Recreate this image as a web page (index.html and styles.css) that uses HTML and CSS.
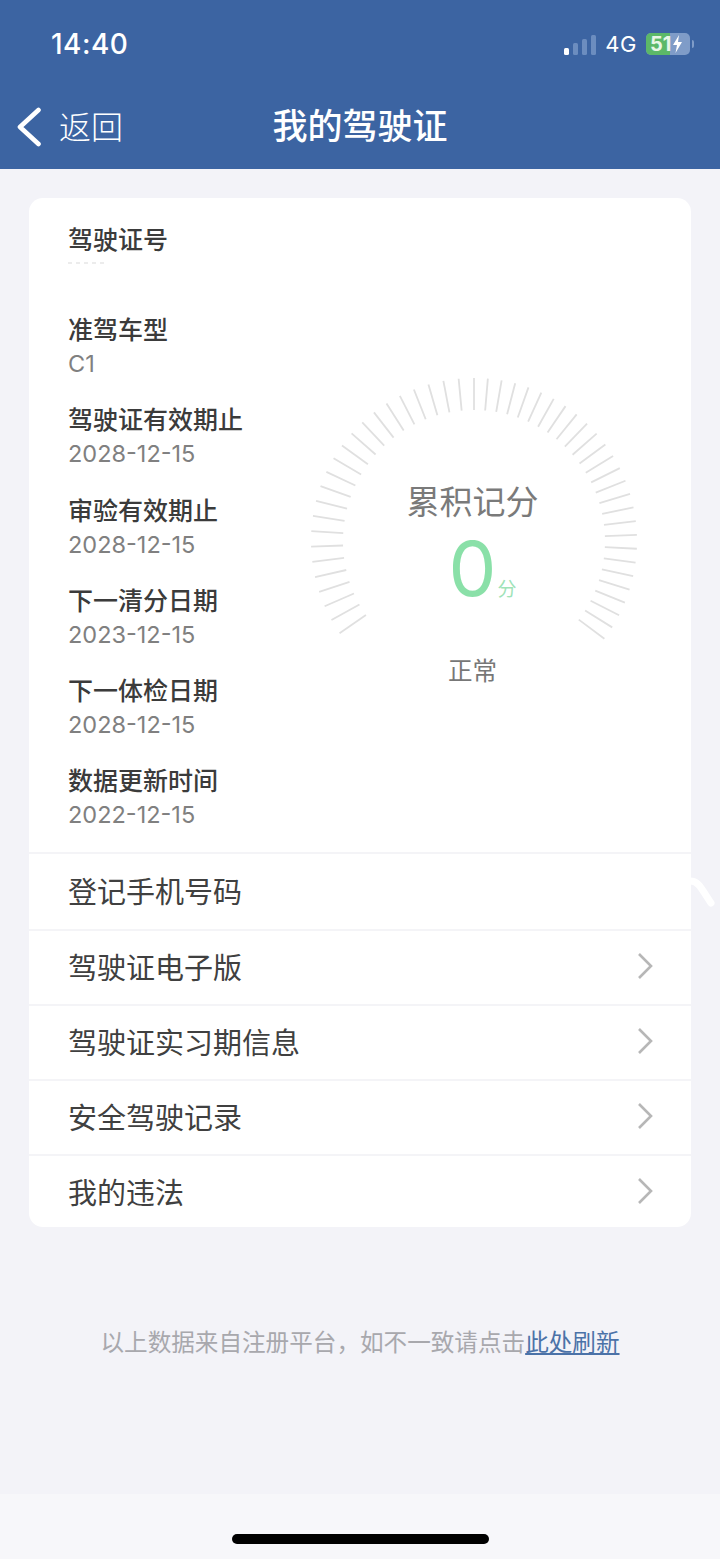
FILE: index.html
```html
<!DOCTYPE html>
<html lang="zh-CN">
<head>
<meta charset="UTF-8">
<meta name="viewport" content="width=device-width, initial-scale=1.0">
<title>我的驾驶证</title>
<link rel="stylesheet" href="styles.css">
</head>
<body>
    <div class="page">
        <header class="header">
            <div class="status-bar">
                <span class="clock">14:40</span>
                <div class="status-icons">
                    <div class="signal">
                        <i class="bar bar-1"></i>
                        <i class="bar bar-2"></i>
                        <i class="bar bar-3"></i>
                        <i class="bar bar-4"></i>
                    </div>
                    <span class="network">4G</span>
                    <div class="battery">
                        <div class="battery-level"></div>
                        <span class="battery-text">51</span>
                        <svg class="battery-bolt" width="11" height="18" viewBox="0 0 11 18"><polygon points="7,0 1,10 5,10 3.5,18 10,7 6,7"/></svg>
                    </div>
                    <i class="battery-tip"></i>
                </div>
            </div>
            <nav class="nav-bar">
                <a class="back">
                    <svg width="26" height="40" viewBox="0 0 26 40"><polyline points="22.5,3 4,20 22.5,37"/></svg>
                    <span class="back-text">返回</span>
                </a>
                <h1 class="nav-title">我的驾驶证</h1>
            </nav>
        </header>

        <main class="content">
            <section class="card">
                <div class="info">
                    <div class="fields">
                        <div class="field">
                            <div class="field-label">驾驶证号</div>
                            <div class="field-hidden"></div>
                        </div>
                        <div class="field">
                            <div class="field-label">准驾车型</div>
                            <div class="field-value">C1</div>
                        </div>
                        <div class="field">
                            <div class="field-label">驾驶证有效期止</div>
                            <div class="field-value">2028-12-15</div>
                        </div>
                        <div class="field">
                            <div class="field-label">审验有效期止</div>
                            <div class="field-value">2028-12-15</div>
                        </div>
                        <div class="field">
                            <div class="field-label">下一清分日期</div>
                            <div class="field-value">2023-12-15</div>
                        </div>
                        <div class="field">
                            <div class="field-label">下一体检日期</div>
                            <div class="field-value">2028-12-15</div>
                        </div>
                        <div class="field">
                            <div class="field-label">数据更新时间</div>
                            <div class="field-value">2022-12-15</div>
                        </div>
                    </div>

                    <div class="gauge">
                        <svg class="gauge-ticks" width="326" height="326" viewBox="-163 -163 326 326">
                            <defs><line id="tick" x1="0" y1="-163" x2="0" y2="-131"/></defs>
                            <use href="#tick" transform="rotate(-124.43)"/>
                            <use href="#tick" transform="rotate(-119.02)"/>
                            <use href="#tick" transform="rotate(-113.61)"/>
                            <use href="#tick" transform="rotate(-108.2)"/>
                            <use href="#tick" transform="rotate(-102.79)"/>
                            <use href="#tick" transform="rotate(-97.38)"/>
                            <use href="#tick" transform="rotate(-91.97)"/>
                            <use href="#tick" transform="rotate(-86.56)"/>
                            <use href="#tick" transform="rotate(-81.15)"/>
                            <use href="#tick" transform="rotate(-75.74)"/>
                            <use href="#tick" transform="rotate(-70.33)"/>
                            <use href="#tick" transform="rotate(-64.92)"/>
                            <use href="#tick" transform="rotate(-59.51)"/>
                            <use href="#tick" transform="rotate(-54.1)"/>
                            <use href="#tick" transform="rotate(-48.69)"/>
                            <use href="#tick" transform="rotate(-43.28)"/>
                            <use href="#tick" transform="rotate(-37.87)"/>
                            <use href="#tick" transform="rotate(-32.46)"/>
                            <use href="#tick" transform="rotate(-27.05)"/>
                            <use href="#tick" transform="rotate(-21.64)"/>
                            <use href="#tick" transform="rotate(-16.23)"/>
                            <use href="#tick" transform="rotate(-10.82)"/>
                            <use href="#tick" transform="rotate(-5.41)"/>
                            <use href="#tick" transform="rotate(0)"/>
                            <use href="#tick" transform="rotate(4.88)"/>
                            <use href="#tick" transform="rotate(9.76)"/>
                            <use href="#tick" transform="rotate(14.64)"/>
                            <use href="#tick" transform="rotate(19.52)"/>
                            <use href="#tick" transform="rotate(24.4)"/>
                            <use href="#tick" transform="rotate(29.28)"/>
                            <use href="#tick" transform="rotate(34.16)"/>
                            <use href="#tick" transform="rotate(39.04)"/>
                            <use href="#tick" transform="rotate(43.92)"/>
                            <use href="#tick" transform="rotate(48.8)"/>
                            <use href="#tick" transform="rotate(53.68)"/>
                            <use href="#tick" transform="rotate(58.56)"/>
                            <use href="#tick" transform="rotate(63.44)"/>
                            <use href="#tick" transform="rotate(68.32)"/>
                            <use href="#tick" transform="rotate(73.2)"/>
                            <use href="#tick" transform="rotate(78.08)"/>
                            <use href="#tick" transform="rotate(82.96)"/>
                            <use href="#tick" transform="rotate(87.84)"/>
                            <use href="#tick" transform="rotate(92.72)"/>
                            <use href="#tick" transform="rotate(97.6)"/>
                            <use href="#tick" transform="rotate(102.48)"/>
                            <use href="#tick" transform="rotate(107.36)"/>
                            <use href="#tick" transform="rotate(112.24)"/>
                            <use href="#tick" transform="rotate(117.12)"/>
                            <use href="#tick" transform="rotate(122)"/>
                            <use href="#tick" transform="rotate(126.88)"/>
                        </svg>
                        <div class="gauge-text">
                            <div class="gauge-title">累积记分</div>
                            <div class="gauge-score"><span class="score-num">0</span><span class="score-unit">分</span></div>
                            <div class="gauge-status">正常</div>
                        </div>
                    </div>
                </div>

                <div class="row">
                    <span>登记手机号码</span>
                </div>
                <div class="row">
                    <span>驾驶证电子版</span>
                    <svg class="chevron" width="16" height="28" viewBox="0 0 16 28"><polyline points="2,2 14,14 2,26"/></svg>
                </div>
                <div class="row">
                    <span>驾驶证实习期信息</span>
                    <svg class="chevron" width="16" height="28" viewBox="0 0 16 28"><polyline points="2,2 14,14 2,26"/></svg>
                </div>
                <div class="row">
                    <span>安全驾驶记录</span>
                    <svg class="chevron" width="16" height="28" viewBox="0 0 16 28"><polyline points="2,2 14,14 2,26"/></svg>
                </div>
                <div class="row">
                    <span>我的违法</span>
                    <svg class="chevron" width="16" height="28" viewBox="0 0 16 28"><polyline points="2,2 14,14 2,26"/></svg>
                </div>
            </section>

            <p class="note">以上数据来自注册平台，如不一致请点击<a class="note-link">此处刷新</a></p>
        </main>

        <footer class="home-area">
            <div class="home-bar"></div>
        </footer>

        <!-- white smear on the right edge of the card -->
        <svg class="smear" width="30" height="34" viewBox="0 0 30 34"><path d="M2 5 C10 5 12 10 23 27"/></svg>
    </div>
</body>
</html>
```

FILE: styles.css
```css
/* Driving licence page */
body {
    margin: 0;
    font-family: "Noto Sans CJK SC", "Noto Sans", sans-serif;
    background-color: #f3f3f8;
}

.page {
    position: relative;
    display: flex;
    flex-direction: column;
    width: 720px;
    height: 1559px;
    overflow: hidden;
}

/* Header */
.header {
    height: 169px;
    background-color: #3c64a2;
    color: #fff;
}

.status-bar {
    display: flex;
    justify-content: space-between;
    align-items: center;
    height: 88px;
    padding: 0 26px 0 51px;
    box-sizing: border-box;
}

.clock {
    font-family: Inter, sans-serif;
    font-size: 28px;
    font-weight: 500;
    letter-spacing: 0.5px;
}

.status-icons {
    display: flex;
    align-items: center;
}

.signal {
    display: flex;
    align-items: flex-end;
    gap: 4px;
    height: 20px;
    margin-right: 9px;
    margin-top: 2px;
}

.bar {
    width: 5px;
    border-radius: 1.5px;
    background-color: #6c8dbf;
}

.bar-1 { height: 7px; background-color: #fff; }
.bar-2 { height: 12px; }
.bar-3 { height: 16px; }
.bar-4 { height: 20px; }

.network {
    font-family: Inter, sans-serif;
    font-size: 22px;
    letter-spacing: 0.5px;
    margin-right: 9px;
}

.battery {
    display: flex;
    align-items: center;
    position: relative;
    width: 44px;
    height: 22px;
    border-radius: 5px;
    background-color: #7f9cc8;
    overflow: hidden;
}

.battery-level {
    position: absolute;
    left: 0;
    top: 0;
    bottom: 0;
    width: 24px;
    background-color: #5cb868;
}

.battery-text {
    position: relative;
    margin-left: 4px;
    font-family: Inter, sans-serif;
    font-size: 20px;
    font-weight: 700;
    line-height: 22px;
    color: #e8f6e6;
}

.battery-bolt {
    position: relative;
    margin-left: 1px;
    fill: #fff;
}

.battery-tip {
    width: 2px;
    height: 8px;
    margin-left: 2px;
    border-radius: 0 2px 2px 0;
    background-color: #7f9cc8;
}

.nav-bar {
    position: relative;
    display: flex;
    justify-content: center;
    align-items: center;
    height: 81px;
}

.back {
    position: absolute;
    left: 16px;
    top: 19px;
    display: flex;
    align-items: center;
    gap: 17px;
    font-size: 32px;
    font-weight: 300;
    line-height: 40px;
}

.back-text {
    margin-top: -4px;
}

.back svg polyline {
    fill: none;
    stroke: #fff;
    stroke-width: 4.6;
    stroke-linecap: round;
    stroke-linejoin: round;
}

.nav-title {
    margin: 0;
    font-size: 35px;
    font-weight: 500;
    line-height: 48px;
    margin-top: -9px;
}

/* Card */
.content {
    flex: 1;
    padding: 29px 29px 0;
}

.card {
    border-radius: 14px;
    background-color: #fff;
}

.info {
    display: flex;
    padding: 23px 0 20px 39px;
}

.fields {
    display: flex;
    flex-direction: column;
    gap: 20.2px;
    width: 243px;
}

.field-label {
    font-size: 25px;
    font-weight: 500;
    line-height: 35px;
    color: #3b3b3b;
}

.field-value {
    font-family: Inter, sans-serif;
    font-size: 23.5px;
    line-height: 35px;
    color: #808080;
}

.field-hidden {
    width: 36px;
    height: 2px;
    margin-top: 6px;
    margin-bottom: 27px;
    background-image: repeating-linear-gradient(90deg, #ececec 0, #ececec 4px, #fff 4px, #fff 8px);
}

/* Gauge */
.gauge {
    display: grid;
    width: 326px;
    margin-top: 157px;
    height: 326px;
}

.gauge-ticks {
    grid-area: 1 / 1;
}

.gauge-ticks use {
    stroke: #e0e0e0;
    stroke-width: 1.8;
}

.gauge-text {
    grid-area: 1 / 1;
    display: flex;
    flex-direction: column;
    align-items: center;
    padding: 100px 3px 0 0;
}

.gauge-title {
    font-size: 33px;
    line-height: 44px;
    color: #7a7a7a;
}

.gauge-score {
    display: flex;
    align-items: baseline;
    margin-top: 6px;
    height: 80px;
}

.score-num {
    font-family: Inter, sans-serif;
    font-size: 76px;
    line-height: 80px;
    color: #8ae0a8;
}

.score-unit {
    width: 19px;
    margin-left: 1px;
    margin-right: -20px;
    font-size: 19px;
    color: #9fe3b8;
}

.gauge-status {
    margin-top: 45px;
    font-size: 24.5px;
    line-height: 34px;
    color: #777;
}

/* List rows */
.row {
    display: flex;
    justify-content: space-between;
    align-items: center;
    height: 75px;
    padding: 0 38px 3px 39px;
    border-top: 2px solid #f4f4f7;
    box-sizing: border-box;
    font-size: 29px;
    color: #404040;
}

.info + .row {
    height: 77px;
}

.row:last-child {
    height: 73px;
    padding-bottom: 2px;
}

.chevron polyline {
    fill: none;
    stroke: #b7b7b7;
    stroke-width: 2.6;
}

/* Footer */
.note {
    margin: 96px 0 0;
    text-align: center;
    font-size: 23.6px;
    line-height: 36px;
    color: #a8a8ad;
}

.note-link {
    color: #4b72a8;
    text-decoration: underline;
}

.home-area {
    display: flex;
    justify-content: center;
    height: 65px;
    background-color: #f7f7fa;
}

.home-bar {
    width: 257px;
    height: 10px;
    margin-top: 40px;
    border-radius: 5px;
    background-color: #000;
}

.smear {
    position: absolute;
    left: 688px;
    top: 876px;
}

.smear path {
    fill: none;
    stroke: #fff;
    stroke-width: 7;
    stroke-linecap: round;
}
```
